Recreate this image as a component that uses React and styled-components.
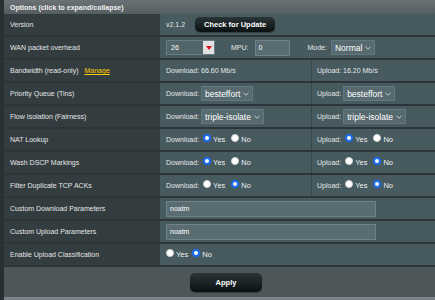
import React from "react";
import styled, { createGlobalStyle } from "styled-components";

const GlobalStyle = createGlobalStyle`
  html, body {
    margin: 0;
    padding: 0;
    background: #4d5659;
    overflow: hidden;
  }
  body {
    font-family: "Liberation Sans", Arial, sans-serif;
  }
`;

const Page = styled.div`
  width: 444px;
  height: 300px;
  border-left: 4px solid #283033;
  display: flex;
  flex-direction: column;
  background: #4d5659;
`;

const Header = styled.div`
  height: 14px;
  display: flex;
  align-items: center;
  padding-left: 6px;
  background: linear-gradient(#6a7275, #555d61);
  color: #f2f2f2;
  font-size: 7px;
  font-weight: bold;
`;

const Row = styled.div`
  display: grid;
  grid-template-columns: 156px 151px 1fr;
  height: 21px;
  border-bottom: 2px solid #2c3538;
`;

const Th = styled.div`
  background: #333c3f;
  color: #e6e6e6;
  font-size: 7px;
  display: flex;
  align-items: center;
  padding-left: 6px;
  gap: 6px;
`;

const Td = styled.div`
  grid-column: span ${(p) => (p.$span ? 2 : 1)};
  background: #475a5f;
  color: #e4e8e8;
  font-size: 7px;
  display: flex;
  align-items: center;
  padding-left: ${(p) => (p.$right ? "5px" : "6px")};
  border-left: ${(p) => (p.$right ? "1px solid #3a474b" : "none")};
  gap: ${(p) => p.$gap || 3}px;
`;

const Link = styled.span`
  color: #ffcc00;
  text-decoration: underline;
`;

const Dark = styled.button`
  height: ${(p) => p.$h}px;
  width: ${(p) => p.$w}px;
  border: none;
  border-radius: 5px;
  background: linear-gradient(#2a3538, #0b1113);
  color: #fff;
  font-family: inherit;
  font-weight: bold;
  font-size: 7.5px;
  padding: 0;
  box-shadow: 0 1px 1px rgba(0, 0, 0, 0.3);
`;

const Select = styled.div`
  height: 15px;
  box-sizing: border-box;
  display: inline-flex;
  align-items: center;
  gap: 3px;
  padding: 0 3px 0 3px;
  background: #566a70;
  border: 1px solid #62787e;
  color: #fff;
  font-size: 8.5px;
`;

const NumSelect = styled.div`
  width: 49px;
  height: 15px;
  box-sizing: border-box;
  display: flex;
  align-items: center;
  justify-content: space-between;
  background: #51656a;
  border: 1px solid #687c81;
  color: #fff;
  font-size: 7px;
  padding-left: 4px;
`;

const ArrowBox = styled.span`
  width: 11px;
  height: 13px;
  background: #e2e2e2;
  display: flex;
  align-items: center;
  justify-content: center;
`;

const Input = styled.div`
  width: ${(p) => p.$w}px;
  height: 16px;
  box-sizing: border-box;
  background: #586c71;
  border: 1px solid #6e8287;
  color: #fff;
  font-size: 7px;
  display: flex;
  align-items: center;
  padding-left: 3px;
`;

const Radio = styled.span`
  width: 8px;
  height: 8px;
  border-radius: 50%;
  box-sizing: border-box;
  display: inline-block;
  margin-top: -3px;
  background: #fff;
  border: ${(p) => (p.$on ? "2px solid #1a6bf0" : "1px solid #d4d4d4")};
`;

const Opt = styled.span`
  display: inline-flex;
  align-items: center;
  gap: 2px;
  margin-right: 2px;
  font-size: 7.5px;
  color: #eef0f0;
`;

const Footer = styled.div`
  height: 30px;
  display: flex;
  align-items: center;
  justify-content: center;
  background: #4d5659;
`;

const Strip = styled.div`
  flex: 1;
  background: #7b8589;
`;

const Chevron = () => (
  <svg width="6" height="4" viewBox="0 0 6 4">
    <path d="M0.5 0.8 L3 3.2 L5.5 0.8" stroke="#dfe6e8" strokeWidth="0.8" fill="none" />
  </svg>
);

const Pick = ({ text }) => (
  <Select>
    {text}
    <Chevron />
  </Select>
);

const Radios = ({ yes }) => (
  <>
    <Opt>
      <Radio $on={yes} />
      Yes
    </Opt>
    <Opt>
      <Radio $on={!yes} />
      No
    </Opt>
  </>
);

const radioRows = [
  ["NAT Lookup", true, true],
  ["Wash DSCP Markings", true, false],
  ["Filter Duplicate TCP ACKs", false, false],
];

export default function App() {
  return (
    <Page>
      <GlobalStyle />
      <Header>Options (click to expand/collapse)</Header>

      <Row>
        <Th>Version</Th>
        <Td $span $gap={10}>
          v2.1.2
          <Dark $w={80} $h={15}>Check for Update</Dark>
        </Td>
      </Row>

      <Row>
        <Th>WAN packet overhead</Th>
        <Td $span $gap={0}>
          <NumSelect>
            26
            <ArrowBox>
              <svg width="6" height="4" viewBox="0 0 6 4">
                <path d="M0 0 L6 0 L3 4 Z" fill="#d0141c" />
              </svg>
            </ArrowBox>
          </NumSelect>
          <span style={{ marginLeft: 13, marginRight: 3 }}>MPU:</span>
          <Input $w={35}>0</Input>
          <span style={{ marginLeft: 15, marginRight: 1 }}>Mode:</span>
          <Pick text="Normal" />
        </Td>
      </Row>

      <Row>
        <Th>
          Bandwidth (read-only) <Link>Manage</Link>
        </Th>
        <Td>Download: 66.60 Mb/s</Td>
        <Td $right>Upload: 16.20 Mb/s</Td>
      </Row>

      <Row>
        <Th>Priority Queue (Tins)</Th>
        <Td $gap={2}>
          Download: <Pick text="besteffort" />
        </Td>
        <Td $right $gap={2}>
          Upload: <Pick text="besteffort" />
        </Td>
      </Row>

      <Row>
        <Th>Flow Isolation (Fairness)</Th>
        <Td $gap={2}>
          Download: <Pick text="triple-isolate" />
        </Td>
        <Td $right $gap={2}>
          Upload: <Pick text="triple-isolate" />
        </Td>
      </Row>

      {radioRows.map(([label, dl, ul]) => (
        <Row key={label}>
          <Th>{label}</Th>
          <Td $gap={4}>
            Download: <Radios yes={dl} />
          </Td>
          <Td $right $gap={4}>
            Upload: <Radios yes={ul} />
          </Td>
        </Row>
      ))}

      <Row>
        <Th>Custom Download Parameters</Th>
        <Td $span>
          <Input $w={210}>noatm</Input>
        </Td>
      </Row>

      <Row>
        <Th>Custom Upload Parameters</Th>
        <Td $span>
          <Input $w={210}>noatm</Input>
        </Td>
      </Row>

      <Row>
        <Th>Enable Upload Classification</Th>
        <Td $span $gap={2}>
          <Radios yes={false} />
        </Td>
      </Row>

      <Footer>
        <Dark $w={72} $h={19}>Apply</Dark>
      </Footer>
      <Strip />
    </Page>
  );
}
